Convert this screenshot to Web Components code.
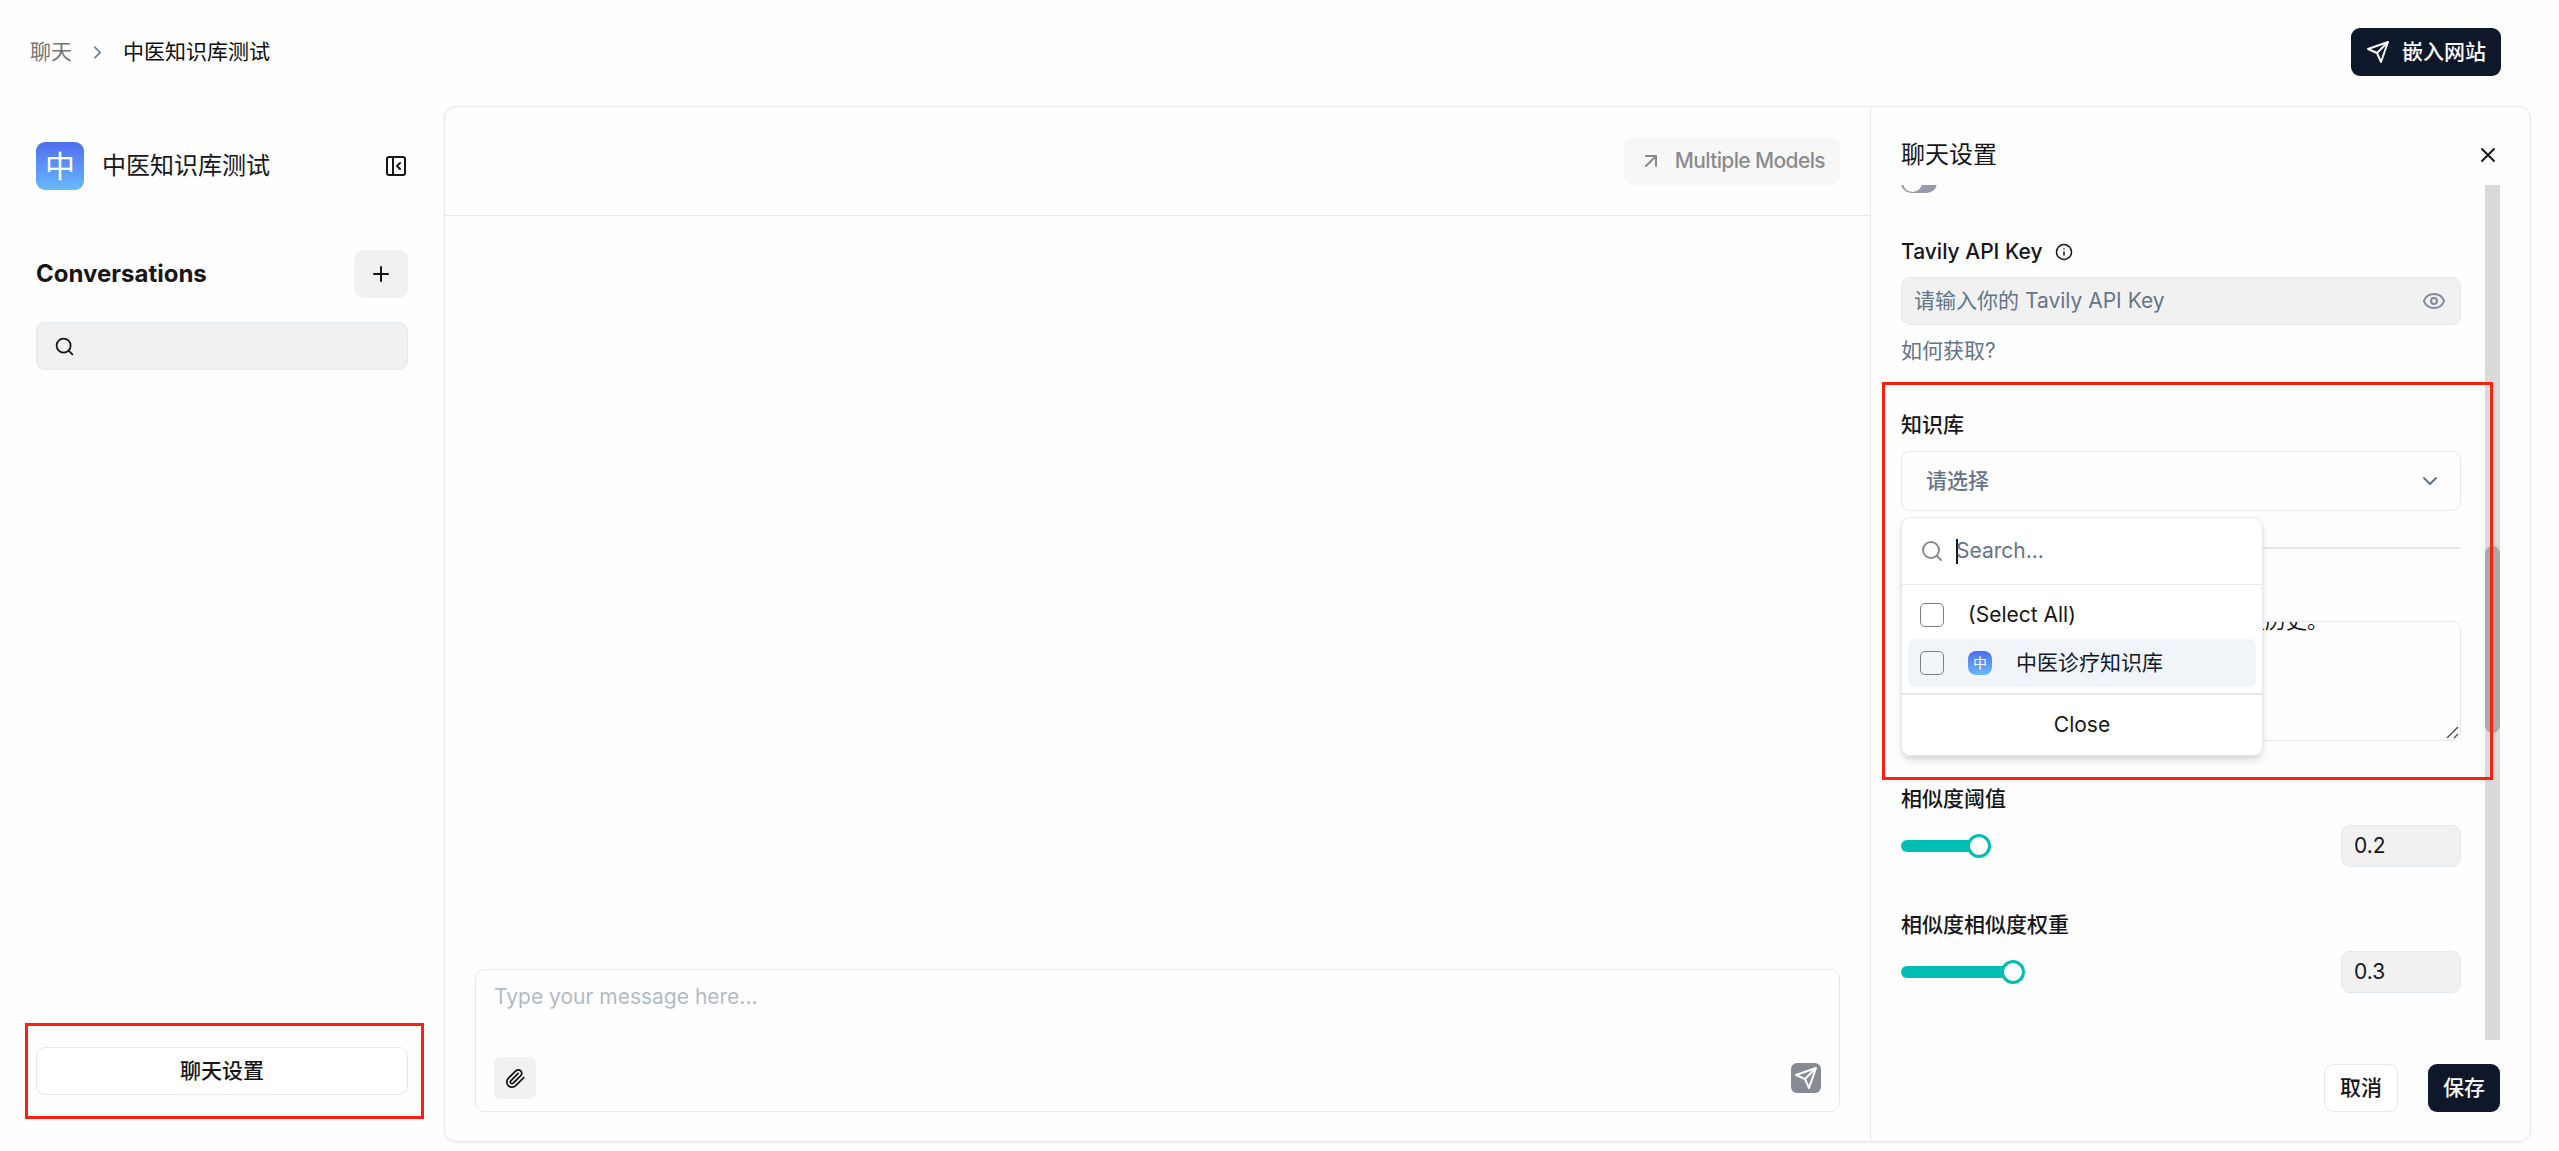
<!DOCTYPE html>
<html lang="zh-CN">
<head>
<meta charset="utf-8">
<title>中医知识库测试</title>
<style>
  html, body {
    margin: 0;
    height: 100%;
  }

  body {
    --border: #e5e7eb;
    --input-border: #e2e8f0;
    --muted: #64748b;
    --text: #161618;
    --card: #f1f1f1;
    --primary: #0f172a;
    --accent: #00beb4;
    --mark: #ff1f0f;

    background: #fefefe;
    color: var(--text);
    font: 21px/30px Inter, "Noto Sans CJK SC", sans-serif;
    overflow: hidden;
  }
</style>
</head>
<body>
<chat-app></chat-app>

<script>
const ICONS = {
  right: '<path d="m9 18 6-6-6-6"/>',
  down: '<path d="m6 9 6 6 6-6"/>',
  close: '<path d="M18 6 6 18M6 6l12 12"/>',
  plus: '<path d="M5 12h14M12 5v14"/>',
  search: '<circle cx="11" cy="11" r="8"/><path d="m21 21-4.3-4.3"/>',
  panel: '<rect x="3" y="3" width="18" height="18" rx="2"/><path d="M9 3v18M16 15l-3-3 3-3"/>',
  arrow: '<path d="M7 7h10v10M7 17 17 7"/>',
  send: '<path d="m22 2-7 20-4-9-9-4ZM22 2 11 13"/>',
  info: '<circle cx="12" cy="12" r="10"/><path d="M12 16v-4M12 8h.01"/>',
  eye: '<path d="M2.06 12.35a1 1 0 0 1 0-.7 10.75 10.75 0 0 1 19.88 0 1 1 0 0 1 0 .7 10.75 10.75 0 0 1-19.88 0"/><circle cx="12" cy="12" r="3"/>',
  clip: '<path d="m21.44 11.05-9.19 9.19a6 6 0 0 1-8.49-8.49l8.57-8.57A4 4 0 1 1 18 8.84l-8.59 8.57a2 2 0 0 1-2.83-2.83l8.49-8.48"/>',
};

class BaseElement extends HTMLElement {
  constructor() {
    super();
    this.attachShadow({ mode: "open" });
  }

  connectedCallback() {
    this.shadowRoot.innerHTML = `
    <style>
      *, *::before, *::after { box-sizing: border-box; }
      :host { box-sizing: border-box; display: block; }
      ${this.constructor.styles || ""}
    </style>
    ${this.template()}`;
  }
}

class UiIcon extends BaseElement {
  static get styles() {
    return /* css */`
      :host { display: flex; flex: none; }
      svg { display: block; }
    `;
  }

  template() {
    const size = this.getAttribute("size") || 24;
    const stroke = this.getAttribute("stroke") || 2;
    return `<svg width="${size}" height="${size}" viewBox="0 0 24 24" fill="none" stroke="currentColor"
      stroke-width="${stroke}" stroke-linecap="round" stroke-linejoin="round">${ICONS[this.getAttribute("name")]}</svg>`;
  }
}

class UiButton extends BaseElement {
  static get styles() {
    return /* css */`
      :host {
        display: flex;
        align-items: center;
        justify-content: center;
        gap: 12px;
        height: 48px;
        padding: 0 15px;
        border-radius: 9px;
        font-weight: 500;
        white-space: nowrap;
      }
      :host([variant="primary"]) { background: var(--primary); color: #f8fafc; }
      :host([variant="outline"]) { border: 1px solid var(--border); background: #fff; }
      :host([variant="soft"]) { background: var(--card); }
      :host([disabled]) { opacity: 0.5; }
    `;
  }

  template() {
    return "<slot></slot>";
  }
}

class LetterAvatar extends BaseElement {
  static get styles() {
    return /* css */`
      :host {
        display: flex;
        flex: none;
        align-items: center;
        justify-content: center;
        width: 48px;
        height: 48px;
        border-radius: 9px;
        background: linear-gradient(#4f6df0, #67b9fb);
        color: #fff;
        font-size: 30px;
        line-height: 1;
      }
      :host([small]) {
        width: 24px;
        height: 24px;
        border-radius: 8px;
        font-size: 14px;
      }
    `;
  }

  template() {
    return "<slot></slot>";
  }
}

class AppHeader extends BaseElement {
  static get styles() {
    return /* css */`
      :host {
        display: flex;
        align-items: center;
        justify-content: space-between;
        height: 104px;
        padding: 0 58px 0 30px;
      }
      nav { display: flex; align-items: center; gap: 15px; }
      .parent { color: #737373; }
      .sep { color: var(--muted); }
      .current { color: #0a0a0a; }
    `;
  }

  template() {
    return `
    <nav>
      <span class="parent">聊天</span>
      <ui-icon class="sep" name="right" size="21"></ui-icon>
      <span class="current">中医知识库测试</span>
    </nav>
    <ui-button variant="primary"><ui-icon name="send"></ui-icon><span>嵌入网站</span></ui-button>`;
  }
}

class ChatSidebar extends BaseElement {
  static get styles() {
    return /* css */`
      :host {
        display: flex;
        flex-direction: column;
        width: 444px;
        padding: 36px 36px 47px;
      }
      .title, .head { display: flex; align-items: center; }
      .title { height: 48px; font-size: 24px; }
      .title span { flex: 1; padding-left: 18px; }
      .head { justify-content: space-between; margin-top: 60px; }
      h2 { margin: 0; font-size: 24px; font-weight: 700; }
      .head ui-button { width: 54px; }
      .search {
        display: flex;
        align-items: center;
        height: 48px;
        margin: 24px 0 auto;
        padding-left: 17px;
        border: 1px solid var(--input-border);
        border-radius: 9px;
        background: var(--card);
      }
      .marked { position: relative; }
      .marked::after {
        content: "";
        position: absolute;
        inset: -24px -16px -24px -11px;
        border: 3px solid var(--mark);
      }
    `;
  }

  template() {
    return `
    <div class="title">
      <letter-avatar>中</letter-avatar>
      <span>中医知识库测试</span>
      <ui-icon name="panel"></ui-icon>
    </div>
    <div class="head">
      <h2>Conversations</h2>
      <ui-button variant="soft"><ui-icon name="plus"></ui-icon></ui-button>
    </div>
    <div class="search"><ui-icon name="search" size="21"></ui-icon></div>
    <div class="marked"><ui-button variant="outline">聊天设置</ui-button></div>`;
  }
}

class ChatBox extends BaseElement {
  static get styles() {
    return /* css */`
      :host {
        display: flex;
        flex: 1;
        flex-direction: column;
      }
      header {
        display: flex;
        justify-content: flex-end;
        height: 109px;
        padding: 30px 30px 0;
        border-bottom: 1px solid var(--border);
      }
      header span { letter-spacing: -0.63px; }
      .messages { flex: 1; }
      .composer {
        display: flex;
        flex-direction: column;
        justify-content: space-between;
        height: 143px;
        margin: 0 30px 29px;
        padding: 12px 18px;
        border: 1px solid var(--input-border);
        border-radius: 9px;
      }
      .placeholder { color: #b1bac5; }
      .tools { display: flex; align-items: center; justify-content: space-between; }
      .attach, .send { padding: 0; border-radius: 6px; }
      .attach { width: 42px; height: 42px; }
      .send { width: 30px; height: 30px; background: #878b94; color: #fff; }
    `;
  }

  template() {
    return `
    <header>
      <ui-button variant="soft" disabled><ui-icon name="arrow"></ui-icon><span>Multiple Models</span></ui-button>
    </header>
    <div class="messages"></div>
    <div class="composer">
      <div class="placeholder">Type your message here...</div>
      <div class="tools">
        <ui-button class="attach" variant="soft"><ui-icon name="clip" size="21"></ui-icon></ui-button>
        <ui-button class="send"><ui-icon name="send"></ui-icon></ui-button>
      </div>
    </div>`;
  }
}

class KnowledgeMenu extends BaseElement {
  static get styles() {
    return /* css */`
      :host {
        width: 362px;
        height: 239px;
        border: 1px solid var(--border);
        border-radius: 9px;
        background: #fff;
        box-shadow: 0 6px 9px -1px #0000001a, 0 3px 6px -2px #0000001a;
      }
      .search {
        display: flex;
        align-items: center;
        gap: 12px;
        height: 67px;
        padding-left: 18px;
        border-bottom: 1px solid var(--border);
        color: var(--muted);
      }
      .search ui-icon { color: #8a8a8f; }
      .caret { width: 2px; height: 25px; margin-right: -14px; background: var(--primary); }
      .list { padding: 6px; }
      .item {
        display: flex;
        align-items: center;
        gap: 24px;
        height: 48px;
        padding-left: 12px;
        border-radius: 6px;
      }
      .item.active { background: #f1f5f9; color: var(--primary); }
      .box {
        flex: none;
        width: 24px;
        height: 24px;
        border: 1px solid #7d7d82;
        border-radius: 5px;
      }
      .close {
        height: 63px;
        border-top: 2px solid var(--border);
        text-align: center;
        line-height: 60px;
      }
    `;
  }

  template() {
    return `
    <div class="search">
      <ui-icon name="search"></ui-icon><i class="caret"></i><span>Search...</span>
    </div>
    <div class="list">
      <div class="item"><i class="box"></i>(Select All)</div>
      <div class="item active"><i class="box"></i><letter-avatar small>中</letter-avatar>中医诊疗知识库</div>
    </div>
    <div class="close">Close</div>`;
  }
}

class SliderField extends BaseElement {
  static get styles() {
    return /* css */`
      .label { font-weight: 500; }
      .row {
        display: flex;
        align-items: center;
        justify-content: space-between;
        margin-top: 11px;
      }
      .track { display: flex; align-items: center; }
      .fill { height: 12px; border-radius: 6px; background: var(--accent); }
      .thumb {
        width: 24px;
        height: 24px;
        margin-left: -12px;
        border: 3px solid var(--accent);
        border-radius: 50%;
        background: #fff;
      }
      .value {
        width: 120px;
        height: 42px;
        padding: 5px 12px;
        border: 1px solid var(--input-border);
        border-radius: 9px;
        background: var(--card);
      }
    `;
  }

  template() {
    return `
    <div class="label"><slot></slot></div>
    <div class="row">
      <div class="track">
        <div class="fill" style="width: ${this.getAttribute("fill")}px"></div>
        <div class="thumb"></div>
      </div>
      <div class="value">${this.getAttribute("value")}</div>
    </div>`;
  }
}

class ChatSettings extends BaseElement {
  static get styles() {
    return /* css */`
      :host {
        position: relative;
        display: flex;
        flex-direction: column;
        width: 660px;
        padding: 0 30px;
        border-left: 1px solid var(--border);
      }
      header {
        display: flex;
        align-items: center;
        justify-content: space-between;
        height: 78px;
        padding-top: 18px;
        font-size: 24px;
      }
      .scroll { display: flex; justify-content: space-between; height: 855px; }
      .form { width: 560px; height: 100%; overflow: hidden; }
      .bar { width: 15px; padding-top: 361px; background: #d9d9d9; }
      .bar i { display: block; height: 187px; border-radius: 8px; background: #a9a9a9; }
      .switch {
        width: 36px;
        height: 21px;
        margin-top: -13px;
        padding: 1px 2px;
        border-radius: 11px;
        background: #979aab;
      }
      .switch i {
        display: block;
        width: 19px;
        height: 19px;
        border-radius: 50%;
        background: #fff;
        box-shadow: 0 15px 23px -4px #0000000d;
      }
      .label { display: flex; align-items: center; gap: 12px; font-weight: 500; }
      .key { margin-top: 44px; }
      .input {
        display: flex;
        align-items: center;
        justify-content: space-between;
        height: 48px;
        margin-top: 10px;
        padding: 0 14px 0 12px;
        border: 1px solid var(--input-border);
        border-radius: 9px;
        background: var(--card);
        color: var(--muted);
      }
      .input ui-icon { color: #7f8ba0; }
      .link { margin-top: 11px; color: var(--muted); }
      .kb { margin-top: 44px; }
      .select {
        display: flex;
        align-items: center;
        justify-content: space-between;
        height: 60px;
        margin-top: 11px;
        padding: 0 18px 0 24px;
        border: 1px solid var(--border);
        border-radius: 9px;
        color: var(--muted);
        font-weight: 500;
      }
      hr { height: 2px; margin: 36px 0 0; border: 0; background: var(--border); }
      .prompt {
        position: relative;
        height: 120px;
        margin-top: 72px;
        padding-left: 342px;
        border: 1px solid var(--input-border);
        border-radius: 9px;
        overflow: hidden;
      }
      .prompt p { margin: -16px 0 0; }
      .prompt svg { position: absolute; right: 1px; bottom: 1px; }
      .threshold { margin-top: 43px; }
      .weight { margin-top: 43px; }
      footer { display: flex; justify-content: flex-end; gap: 30px; margin-top: 24px; }
      footer ui-button { padding: 0 15px; }
      knowledge-menu { position: absolute; left: 30px; top: 410px; }
      .mark {
        position: absolute;
        left: 11px;
        top: 275px;
        width: 611px;
        height: 398px;
        border: 3px solid var(--mark);
      }
    `;
  }

  template() {
    return `
    <header><span>聊天设置</span><ui-icon name="close"></ui-icon></header>
    <div class="scroll">
      <div class="form">
        <div class="switch"><i></i></div>
        <div class="label key">Tavily API Key <ui-icon name="info" size="18"></ui-icon></div>
        <div class="input"><span>请输入你的 Tavily API Key</span><ui-icon name="eye"></ui-icon></div>
        <div class="link">如何获取?</div>
        <div class="label kb">知识库</div>
        <div class="select">请选择<ui-icon name="down"></ui-icon></div>
        <hr>
        <div class="prompt">
          <p>天历史。</p>
          <svg width="13" height="13" fill="none" stroke="#555" stroke-width="1.5"><path d="M1 12 12 1M8 12l4-4"/></svg>
        </div>
        <slider-field class="threshold" fill="78" value="0.2">相似度阈值</slider-field>
        <slider-field class="weight" fill="112" value="0.3">相似度相似度权重</slider-field>
      </div>
      <div class="bar"><i></i></div>
    </div>
    <footer>
      <ui-button variant="outline">取消</ui-button>
      <ui-button variant="primary">保存</ui-button>
    </footer>
    <knowledge-menu></knowledge-menu>
    <div class="mark"></div>`;
  }
}

class ChatApp extends BaseElement {
  static get styles() {
    return /* css */`
      :host { height: 1151px; }
      main { display: flex; height: 1036px; margin-top: 2px; padding-right: 28px; }
      .card {
        display: flex;
        flex: 1;
        border: 1px solid var(--border);
        border-radius: 12px;
        box-shadow: 0 1px 3px #0000000d;
      }
    `;
  }

  template() {
    return `
    <app-header></app-header>
    <main>
      <chat-sidebar></chat-sidebar>
      <div class="card">
        <chat-box></chat-box>
        <chat-settings></chat-settings>
      </div>
    </main>`;
  }
}

customElements.define("ui-icon", UiIcon);
customElements.define("ui-button", UiButton);
customElements.define("letter-avatar", LetterAvatar);
customElements.define("app-header", AppHeader);
customElements.define("chat-sidebar", ChatSidebar);
customElements.define("chat-box", ChatBox);
customElements.define("knowledge-menu", KnowledgeMenu);
customElements.define("slider-field", SliderField);
customElements.define("chat-settings", ChatSettings);
customElements.define("chat-app", ChatApp);
</script>
</body>
</html>
